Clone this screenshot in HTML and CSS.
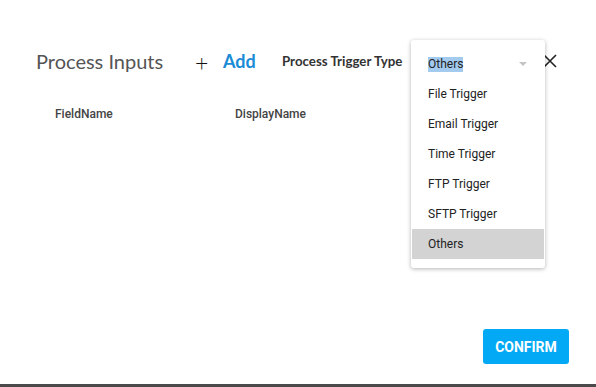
FILE: index.html
```html
<!DOCTYPE html>
<html lang="en">
  <head>
    <meta charset="UTF-8" />
    <meta name="viewport" content="width=device-width, initial-scale=1.0" />
    <title>Process Inputs</title>
    <link rel="stylesheet" href="styles.css">
  </head>
  <body>
    <div class="dialog">
      <!-- Header -->
      <div class="header">
        <h2 class="title">Process Inputs</h2>
        <span class="plus">+</span>
        <a href="#" class="add-link">Add</a>
        <span class="trigger-label">Process Trigger Type</span>

        <div class="select-wrap">
          <ul class="menu">
            <li class="menu-item current">
              <span class="selected-text">Others</span>
              <span class="arrow"></span>
            </li>
            <li class="menu-item">File Trigger</li>
            <li class="menu-item">Email Trigger</li>
            <li class="menu-item">Time Trigger</li>
            <li class="menu-item">FTP Trigger</li>
            <li class="menu-item">SFTP Trigger</li>
            <li class="menu-item active">Others</li>
          </ul>
        </div>

        <button class="close-btn" aria-label="Close">
          <svg width="14" height="14" viewBox="0 0 14 14">
            <path d="M1 1 L13 13 M13 1 L1 13" stroke="#222" stroke-width="1.6" fill="none" />
          </svg>
        </button>
      </div>

      <!-- Table headers -->
      <div class="columns">
        <span class="col col-field">FieldName</span>
        <span class="col col-display">DisplayName</span>
      </div>

      <div class="footer">
        <button class="confirm-btn">CONFIRM</button>
      </div>
    </div>
  </body>
</html>
```

FILE: styles.css
```css
* {
  margin: 0;
  padding: 0;
  box-sizing: border-box;
}

body {
  background: #4a4a4a;
  font-family: "Roboto", "Liberation Sans", sans-serif;
}

.dialog {
  background: #fff;
  width: 596px;
  height: 384px;
  display: flex;
  flex-direction: column;
}

.header {
  display: flex;
  align-items: center;
  height: 44px;
  margin-top: 39px;
  padding-left: 36px;
}

.title {
  font-family: "Lato", "Open Sans", sans-serif;
  font-weight: 400;
  font-size: 20px;
  color: #555;
  width: 159px;
}

.plus {
  font-family: "Lato", sans-serif;
  font-size: 23px;
  font-weight: 300;
  color: #111;
  width: 28px;
  margin-top: 1px;
}

.add-link {
  font-family: "Lato", sans-serif;
  font-weight: 700;
  font-size: 18px;
  color: #1a8bd6;
  text-decoration: none;
  width: 59px;
}

.trigger-label {
  font-family: "Lato", sans-serif;
  font-weight: 700;
  font-size: 13.3px;
  color: #333;
  width: 129px;
}

.select-wrap {
  position: relative;
  width: 134px;
  height: 44px;
}

.menu {
  list-style: none;
  position: absolute;
  top: 1px;
  left: 0;
  width: 134px;
  padding: 9px 0 9px;
  background: #fff;
  border-radius: 3px;
  box-shadow: 0 1px 4px rgba(0, 0, 0, 0.3);
  z-index: 10;
}

.menu-item {
  height: 30px;
  line-height: 30px;
  padding-left: 17px;
  font-size: 12px;
  color: #222;
}

.menu-item.current {
  display: flex;
  align-items: center;
  justify-content: space-between;
  padding-right: 18px;
}

.selected-text {
  background: #a3cbef;
  line-height: 15px;
}

.arrow {
  width: 0;
  height: 0;
  border-left: 4px solid transparent;
  border-right: 4px solid transparent;
  border-top: 4px solid #c4c4c4;
}

.menu-item.active {
  background: #d3d3d3;
  margin: 0 1px;
  padding-left: 16px;
}

.close-btn {
  background: none;
  border: none;
  margin-left: -2px;
  display: flex;
}

.columns {
  display: flex;
  margin-top: 21px;
  padding-left: 55px;
  height: 20px;
  align-items: center;
}

.col {
  font-size: 12px;
  font-weight: 500;
  color: #444;
}

.col-field {
  width: 180px;
}

.footer {
  margin-top: auto;
  display: flex;
  justify-content: flex-end;
  padding: 0 27px 20px 0;
}

.confirm-btn {
  background: #03a9f4;
  color: #fff;
  border: none;
  border-radius: 3px;
  width: 86px;
  height: 35px;
  font-family: "Roboto", sans-serif;
  font-weight: 700;
  font-size: 14px;
}
```
